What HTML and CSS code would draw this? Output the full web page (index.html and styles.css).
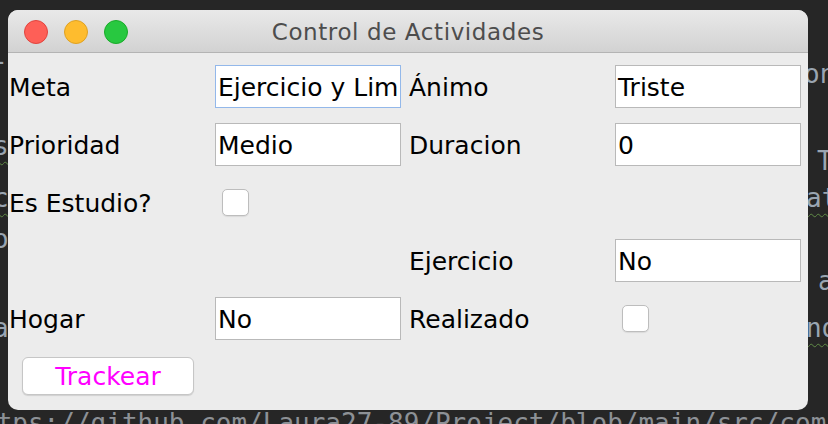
FILE: index.html
```html
<!DOCTYPE html>
<html lang="es">
<head>
<meta charset="utf-8">
<title>Control de Actividades</title>
<link rel="stylesheet" href="styles.css">
</head>
<body>
<div class="desk">
  <div class="code">
    <span class="frag f-l1">-</span>
    <span class="frag f-l2 sq">s</span>
    <span class="frag f-l3 sq">c</span>
    <span class="frag f-l4">o</span>
    <span class="frag f-l5">a</span>
    <span class="frag f-r1">on</span>
    <span class="frag f-r2">T</span>
    <span class="frag f-r3 sq">at</span>
    <span class="frag f-r4">a</span>
    <span class="frag f-r5 sq">nd</span>
    <span class="frag f-url">ttps://github.com/Laura27-89/Project/blob/main/src/com</span>
  </div>

  <div class="window">
    <div class="titlebar">
      <div class="lights">
        <span class="light red"></span>
        <span class="light yellow"></span>
        <span class="light green"></span>
      </div>
      <div class="title">Control de Actividades</div>
    </div>
    <div class="form">
      <div class="cell label">Meta</div>
      <div class="cell"><div class="field focused">Ejercicio y Limpieza</div></div>
      <div class="cell label">Ánimo</div>
      <div class="cell"><div class="field">Triste</div></div>

      <div class="cell label">Prioridad</div>
      <div class="cell"><div class="field">Medio</div></div>
      <div class="cell label">Duracion</div>
      <div class="cell"><div class="field">0</div></div>

      <div class="cell label">Es Estudio?</div>
      <div class="cell"><span class="check"></span></div>
      <div class="cell"></div>
      <div class="cell"></div>

      <div class="cell"></div>
      <div class="cell"></div>
      <div class="cell label">Ejercicio</div>
      <div class="cell"><div class="field">No</div></div>

      <div class="cell label">Hogar</div>
      <div class="cell"><div class="field">No</div></div>
      <div class="cell label">Realizado</div>
      <div class="cell"><span class="check"></span></div>

      <div class="cell"><button class="btn" type="button">Trackear</button></div>
      <div class="cell"></div>
      <div class="cell"></div>
      <div class="cell"></div>
    </div>
  </div>
</div>
</body>
</html>
```

FILE: styles.css
```css
html, body {
  margin: 0;
  padding: 0;
  width: 828px;
  height: 424px;
  overflow: hidden;
  background: #262626;
}

.desk {
  position: relative;
  width: 828px;
  height: 424px;
  overflow: hidden;
  background: #262626;
}

.code {
  font-family: "DejaVu Sans Mono", "Liberation Mono", monospace;
  font-size: 26px;
  line-height: 30px;
  color: #9aa5b1;
}

.frag {
  position: absolute;
  white-space: pre;
}

.sq {
  text-decoration-line: underline;
  text-decoration-style: wavy;
  text-decoration-color: #5f8a45;
  text-decoration-thickness: 1px;
  text-underline-offset: 6px;
}

.f-l1 { left: -8px; top: 46px; }
.f-l2 { left: -7px; top: 131px; }
.f-l3 { left: -7px; top: 183px; }
.f-l4 { left: -7px; top: 224px; }
.f-l5 { left: -7px; top: 313px; }
.f-r1 { left: 804px; top: 59px; }
.f-r2 { left: 817px; top: 146px; }
.f-r3 { left: 806px; top: 183px; }
.f-r4 { left: 818px; top: 266px; }
.f-r5 { left: 806px; top: 313px; }
.f-url { left: -19px; top: 408px; color: #8d9196; }

.window {
  position: absolute;
  left: 8px;
  top: 10px;
  width: 800px;
  height: 400px;
  border-radius: 10px;
  overflow: hidden;
  background: #ececec;
  font-family: "DejaVu Sans", "Liberation Sans", sans-serif;
}

.titlebar {
  position: relative;
  box-sizing: border-box;
  height: 43px;
  padding-top: 2px;
  border-bottom: 1px solid #b4b4b4;
  background: linear-gradient(#e9e9e9, #d2d2d2);
  display: flex;
  align-items: center;
  justify-content: center;
}

.lights {
  position: absolute;
  left: 16px;
  top: 10px;
  display: flex;
  gap: 16px;
}

.light {
  width: 24px;
  height: 24px;
  border-radius: 50%;
  box-sizing: border-box;
}
.red { background: #fe5f57; border: 1px solid #e0443e; }
.yellow { background: #febc2e; border: 1px solid #dea123; }
.green { background: #28c840; border: 1px solid #1aab29; }

.title {
  font-size: 23px;
  color: #4d4d4d;
  letter-spacing: 0.6px;
}

.form {
  display: grid;
  grid-template-columns: repeat(4, 200px);
  grid-template-rows: repeat(6, 58px);
  padding-top: 4px;
}

.cell {
  display: flex;
  align-items: center;
  min-width: 0;
}

.label {
  padding-left: 1px;
  padding-top: 2px;
  font-size: 25px;
  color: #000;
}

.field {
  box-sizing: border-box;
  width: 186px;
  height: 43px;
  margin-left: 7px;
  background: #fff;
  border: 1px solid #b9b9b9;
  padding-left: 2px;
  padding-top: 1px;
  font-size: 25px;
  line-height: 42px;
  color: #000;
  white-space: nowrap;
  overflow: hidden;
}

.field.focused {
  border-color: #93b8ea;
}

.check {
  box-sizing: border-box;
  width: 27px;
  height: 27px;
  margin-left: 14px;
  background: #fff;
  border: 1px solid #bdbdbd;
  border-radius: 5px;
  box-shadow: 0 1px 1px rgba(0, 0, 0, 0.08);
}

.btn {
  box-sizing: border-box;
  width: 172px;
  height: 38px;
  margin-left: 14px;
  background: #fff;
  border: 1px solid #c6c6c6;
  border-radius: 6px;
  box-shadow: 0 1px 1px rgba(0, 0, 0, 0.12);
  font-family: "DejaVu Sans", "Liberation Sans", sans-serif;
  font-size: 25px;
  color: #ff00ff;
  padding: 0;
}
```
